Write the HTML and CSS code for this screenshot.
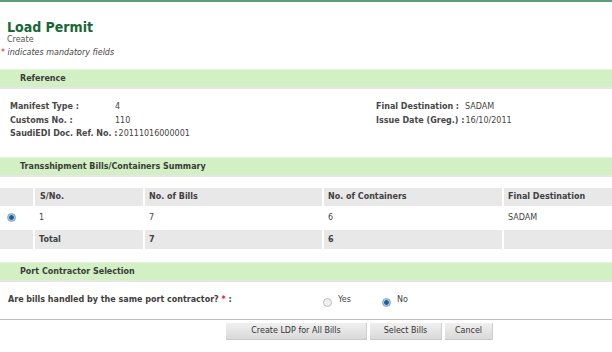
FILE: index.html
```html
<!DOCTYPE html>
<html lang="en">
<head>
  <meta charset="UTF-8" />
  <title>Load Permit</title>
  <link rel="stylesheet" href="styles.css">
</head>
<body>

  <div class="page-head">
    <h1>Load Permit</h1>
    <div class="sub">Create</div>
    <div class="note"><span class="req">*</span> indicates mandatory fields</div>
  </div>

  <div class="section-bar">Reference</div>

  <div class="ref">
    <div class="ref-col left">
      <div class="ref-row"><span class="lbl">Manifest Type :</span><span class="val">4</span></div>
      <div class="ref-row"><span class="lbl">Customs No. :</span><span class="val">110</span></div>
      <div class="ref-row"><span class="lbl">SaudiEDI Doc. Ref. No. :</span><span class="val">20111016000001</span></div>
    </div>
    <div class="ref-col right">
      <div class="ref-row"><span class="lbl">Final Destination :</span><span class="val">SADAM</span></div>
      <div class="ref-row"><span class="lbl">Issue Date (Greg.) :</span><span class="val">16/10/2011</span></div>
    </div>
  </div>

  <div class="section-bar">Transshipment Bills/Containers Summary</div>

  <table class="summary">
    <tr class="head">
      <th class="sel"></th>
      <th class="c1">S/No.</th>
      <th class="c2">No. of Bills</th>
      <th class="c3">No. of Containers</th>
      <th class="c4">Final Destination</th>
    </tr>
    <tr class="row">
      <td class="sel"><span class="radio on"></span></td>
      <td>1</td>
      <td>7</td>
      <td>6</td>
      <td>SADAM</td>
    </tr>
    <tr class="total">
      <td class="sel"></td>
      <td>Total</td>
      <td>7</td>
      <td>6</td>
      <td></td>
    </tr>
  </table>

  <div class="section-bar spaced">Port Contractor Selection</div>

  <div class="question">
    <span class="q-lbl">Are bills handled by the same port contractor? <span class="req">*</span> :</span>
    <label class="choice yes"><span class="radio"></span><span>Yes</span></label>
    <label class="choice"><span class="radio on"></span><span>No</span></label>
  </div>

  <div class="actions">
    <button class="btn wide">Create LDP for All Bills</button>
    <button class="btn mid">Select Bills</button>
    <button class="btn small">Cancel</button>
  </div>

</body>
</html>
```

FILE: styles.css
```css
body {
  margin: 0;
  font-family: "DejaVu Sans", Verdana, sans-serif;
  font-size: 8px;
  color: #444;
  background: #fff;
  border-top: 2px solid #5f9b7b;
}
.page-head {
  height: 50px;
  padding: 17px 0 0 7px;
}
h1 {
  margin: 0;
  font-family: "DejaVu Sans Condensed", "DejaVu Sans", sans-serif;
  font-size: 14px;
  line-height: 16px;
  color: #176636;
}
.sub {
  line-height: 10px;
  color: #555;
}
.note {
  margin: 3px 0 0 -6px;
  font-style: italic;
  color: #444;
}
.req {
  color: #e0212d;
}
.section-bar {
  height: 17px;
  line-height: 17px;
  padding-left: 20px;
  background: #d3f0c4;
  border-top: 1px solid #e2f5d8;
  border-bottom: 2px solid #e6e6e6;
  font-weight: bold;
  color: #3b3b3b;
}
.section-bar.spaced {
  margin-top: 11px;
}
.ref {
  display: flex;
  padding: 11px 0 16px 10px;
}
.ref-col.left {
  width: 366px;
}
.ref-row {
  display: flex;
  height: 13.5px;
  line-height: 13px;
}
.lbl {
  flex-shrink: 0;
  padding-right: 1px;
  font-weight: bold;
  color: #484848;
}
.left .lbl {
  min-width: 104px;
}
.right .lbl {
  min-width: 88px;
}
.summary {
  width: 100%;
  margin-top: 11px;
  border-collapse: separate;
  border-spacing: 0;
  table-layout: fixed;
}
.summary th,
.summary td {
  box-sizing: border-box;
  padding: 0 0 0 4px;
  text-align: left;
  border-right: 2px solid #fff;
  border-bottom: 2px solid #fff;
}
.summary th:last-child,
.summary td:last-child {
  border-right: none;
}
.summary .head th {
  height: 20px;
  background: #e8e8e8;
  color: #404040;
}
.summary .row td {
  height: 22px;
  color: #444;
}
.summary .total td {
  height: 21px;
  background: #e8e8e8;
  font-weight: bold;
  color: #404040;
}
.summary .sel {
  width: 35px;
  padding-left: 7px;
}
.summary .c1 { width: 110px; padding-left: 5px; }
.summary .c2 { width: 179px; }
.summary .c3 { width: 180px; }
.radio {
  display: inline-block;
  width: 7px;
  height: 7px;
  border-radius: 50%;
  border: 1px solid #bdbdbd;
  background: #f0f0f0;
  vertical-align: middle;
}
.radio.on {
  border-color: #86a6c2;
  background: radial-gradient(circle, #1d5f9a 0 2px, #a9c6df 2.6px);
}
.question {
  display: flex;
  align-items: flex-start;
  padding: 12px 0 12px 8px;
  line-height: 12px;
  border-bottom: 1px solid #bdbdbd;
}
.q-lbl {
  width: 315px;
  font-weight: bold;
  color: #404040;
}
.choice {
  display: flex;
  align-items: flex-start;
  gap: 6px;
  color: #444;
}
.choice.yes {
  width: 59px;
}
.choice .radio {
  margin-top: 4px;
}
.actions {
  display: flex;
  gap: 3px;
  padding: 3px 0 0 226px;
}
.btn {
  height: 17px;
  padding: 0;
  font-family: inherit;
  font-size: 8px;
  color: #333;
  border: none;
  border-right: 1px solid #cfcfcf;
  border-bottom: 1px solid #c8c8c8;
  background: linear-gradient(#f0f0f0, #d9d9d9);
}
.btn.wide { width: 141px; }
.btn.mid { width: 72px; }
.btn.small { width: 48px; }
```
